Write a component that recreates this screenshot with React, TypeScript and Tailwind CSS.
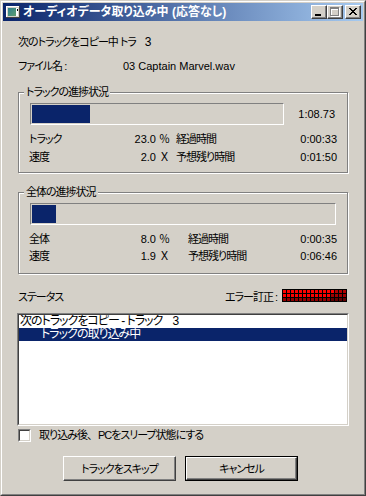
import React from "react";

const FONT = "font-['Liberation_Sans','Noto_Sans_CJK_JP',sans-serif] [font-feature-settings:'palt']";
const J = "tracking-[-1px]";
const FW = "[font-feature-settings:normal] tracking-normal";

function TitleIcon() {
  return (
    <svg width="16" height="16" viewBox="0 0 16 16" shapeRendering="crispEdges">
      <defs>
        <linearGradient id="ti" x1="0" y1="0" x2="1" y2="1">
          <stop offset="0" stopColor="#2f7f8f" />
          <stop offset="1" stopColor="#5f9f6f" />
        </linearGradient>
      </defs>
      <rect x="1" y="2" width="14" height="12" fill="#d4d0c8" />
      <rect x="1" y="2" width="14" height="1" fill="#ffffff" />
      <rect x="1" y="2" width="1" height="12" fill="#ffffff" />
      <rect x="1" y="13" width="14" height="1" fill="#404040" />
      <rect x="14" y="2" width="1" height="12" fill="#404040" />
      <rect x="3" y="4" width="8" height="8" fill="url(#ti)" />
      <rect x="11" y="4" width="2" height="8" fill="#ffffff" />
      <rect x="12" y="5" width="1" height="2" fill="#000000" />
    </svg>
  );
}

function CapButton({ children }: { children: React.ReactNode }) {
  return (
    <div className="w-[16px] h-[14px] bg-[#d4d0c8] border border-t-white border-l-white border-r-[#404040] border-b-[#404040] shadow-[inset_-1px_-1px_0_#808080] flex">
      {children}
    </div>
  );
}

const X_PIX = [
  "XX....XX",
  ".XX..XX.",
  "..XXXX..",
  "...XX...",
  "..XXXX..",
  ".XX..XX.",
  "XX....XX",
];

function CloseGlyph() {
  const rects: React.ReactNode[] = [];
  X_PIX.forEach((row, y) =>
    row.split("").forEach((ch, x) => {
      if (ch === "X") rects.push(<rect key={`${x}-${y}`} x={x} y={y} width="1" height="1" fill="#000" />);
    })
  );
  return (
    <svg width="8" height="7" viewBox="0 0 8 7" shapeRendering="crispEdges" className="ml-[3px] mt-[2px]">
      {rects}
    </svg>
  );
}

function MaxGlyph() {
  const box = (o: number, c: string) => (
    <g>
      <rect x={o} y={o} width="9" height="2" fill={c} />
      <rect x={o} y={o} width="1" height="9" fill={c} />
      <rect x={o + 8} y={o} width="1" height="9" fill={c} />
      <rect x={o} y={o + 8} width="9" height="1" fill={c} />
    </g>
  );
  return (
    <svg width="10" height="10" viewBox="0 0 10 10" shapeRendering="crispEdges" className="ml-[2px] mt-[1px]">
      {box(1, "#ffffff")}
      {box(0, "#808080")}
    </svg>
  );
}

function MinGlyph() {
  return (
    <svg width="6" height="2" viewBox="0 0 6 2" shapeRendering="crispEdges" className="ml-[3px] mt-[8px]">
      <rect x="0" y="0" width="6" height="2" fill="#000" />
    </svg>
  );
}

const METER: string[][] = [
  Array.from({ length: 16 }, (_, c) => (c < 13 ? "bg-[#ff0000]" : "bg-[#b00000]")),
  Array.from({ length: 16 }, (_, c) => (c < 12 ? "bg-[#ff0000]" : "bg-[#a00000]")),
  Array.from({ length: 16 }, (_, c) => (c < 12 ? "bg-[#900000]" : "bg-[#600000]")),
];

function Meter() {
  return (
    <div className="grid grid-cols-[repeat(16,3px)] grid-rows-[repeat(3,3px)] gap-[1px] p-[1px] bg-black w-[65px] h-[13px]">
      {METER.flatMap((row, r) => row.map((cls, c) => <div key={`${r}-${c}`} className={cls} />))}
    </div>
  );
}

function ProgressBar({ widthClass, fillClass }: { widthClass: string; fillClass: string }) {
  return (
    <div className={`${widthClass} ml-[1px] h-[22px] border border-t-[#808080] border-l-[#808080] border-r-white border-b-white p-[1px]`}>
      <div className={`${fillClass} h-full bg-[#0a246a]`} />
    </div>
  );
}

function StatRow({
  label,
  num,
  unit,
  label2,
  time,
  gapClass,
  hClass,
}: {
  label: string;
  num: string;
  unit: string;
  label2: string;
  time: string;
  gapClass: string;
  hClass: string;
}) {
  return (
    <div className={`flex items-center ${hClass} whitespace-nowrap`}>
      <div className="w-[141px] flex justify-between">
        <span className={J}>{label}</span>
        <span>
          {num} <span className={FW}>{unit}</span>
        </span>
      </div>
      <span className={`${gapClass} ${J}`}>{label2}</span>
      <span className="flex-1 text-right">{time}</span>
    </div>
  );
}

export default function App() {
  return (
    <div className={`${FONT} text-[11px] text-black w-[366px] h-[496px] bg-[#d4d0c8] border border-t-[#d4d0c8] border-l-[#d4d0c8] border-r-[#404040] border-b-[#404040]`}>
      <div className="h-full border border-t-white border-l-white border-r-[#808080] border-b-[#808080] p-[1px] flex flex-col">
        {/* Title bar */}
        <div className="h-[18px] flex items-center bg-[linear-gradient(to_right,#0a246a,#a6caf0)]">
          <div className="ml-[2px]">
            <TitleIcon />
          </div>
          <span className="ml-[2px] text-white font-bold text-[12px] leading-[18px] whitespace-nowrap">
            オーディオデータ取り込み中 (応答なし)
          </span>
          <div className="ml-auto mr-[2px] flex items-center">
            <CapButton>
              <MinGlyph />
            </CapButton>
            <CapButton>
              <MaxGlyph />
            </CapButton>
            <div className="ml-[2px]">
              <CapButton>
                <CloseGlyph />
              </CapButton>
            </div>
          </div>
        </div>

        {/* Content */}
        <div className="px-[14px] flex flex-col">
          <div className="mt-[14px] h-[14px] leading-[14px] pl-[1px] flex whitespace-nowrap">
            <span className={J}>次のトラックをコピー中 トラ</span>
            <span className="ml-[9px] text-[12px]">3</span>
          </div>
          <div className="mt-[10px] h-[14px] leading-[14px] pl-[1px] flex whitespace-nowrap">
            <span className={`w-[105px] ${J}`}>ファイル名 :</span>
            <span>03 Captain Marvel.wav</span>
          </div>

          {/* Group 1 */}
          <fieldset className="mt-[12px] ml-[1px] w-[330px] border border-[#808080] shadow-[inset_1px_1px_0_#fff,1px_1px_0_#fff]">
            <legend className={`ml-[5px] px-[2px] leading-[14px] bg-[#d4d0c8] ${J}`}>トラックの進捗状況</legend>
            <div className="px-[10px] pt-[4px] pb-[6px]">
              <div className="flex items-center">
                <ProgressBar widthClass="w-[254px]" fillClass="w-[23%]" />
                <span className="flex-1 text-right pr-[2px]">1:08.73</span>
              </div>
              <div className="mt-[5px]">
                <StatRow label="トラック" num="23.0" unit="％" label2="経過時間" time="0:00:33" gapClass="ml-[6px]" hClass="h-[18px]" />
                <StatRow label="速度" num="2.0" unit="Ｘ" label2="予想残り時間" time="0:01:50" gapClass="ml-[6px]" hClass="h-[18px]" />
              </div>
            </div>
          </fieldset>

          {/* Group 2 */}
          <fieldset className="mt-[12px] ml-[1px] w-[330px] border border-[#808080] shadow-[inset_1px_1px_0_#fff,1px_1px_0_#fff]">
            <legend className={`ml-[5px] px-[2px] leading-[14px] bg-[#d4d0c8] ${J}`}>全体の進捗状況</legend>
            <div className="px-[10px] pt-[4px] pb-[8px]">
              <ProgressBar widthClass="w-[306px]" fillClass="w-[8%]" />
              <div className="mt-[6px]">
                <StatRow label="全体" num="8.0" unit="％" label2="経過時間" time="0:00:35" gapClass="ml-[18px]" hClass="h-[17px]" />
                <StatRow label="速度" num="1.9" unit="Ｘ" label2="予想残り時間" time="0:06:46" gapClass="ml-[18px]" hClass="h-[17px]" />
              </div>
            </div>
          </fieldset>

          {/* Status row */}
          <div className="mt-[15px] flex items-start whitespace-nowrap">
            <span className={`mt-[1px] pl-[1px] leading-[14px] ${J}`}>ステータス</span>
            <span className={`ml-auto mt-[1px] leading-[14px] ${J}`}>エラー訂正 :</span>
            <div className="ml-[5px] mr-[2px]">
              <Meter />
            </div>
          </div>

          {/* Listbox */}
          <div className="mt-[9px] h-[113px] border border-t-[#808080] border-l-[#808080] border-r-white border-b-white">
            <div className="h-full bg-white border border-t-[#404040] border-l-[#404040] border-r-[#d4d0c8] border-b-[#d4d0c8] overflow-hidden text-[12px] tracking-[-1px]">
              <div className="h-[13px] leading-[13px] pl-[1px] whitespace-nowrap flex">
                <span>次のトラックをコピー - トラック</span>
                <span className="ml-[10px]">3</span>
              </div>
              <div className="h-[13px] leading-[13px] pl-[22px] whitespace-nowrap bg-[#0a246a] text-white">トラックの取り込み中</div>
            </div>
          </div>

          {/* Checkbox */}
          <div className="mt-[3px] h-[13px] flex items-center whitespace-nowrap">
            <div className="ml-[1px] w-[13px] h-[13px] border border-t-[#808080] border-l-[#808080] border-r-white border-b-white">
              <div className="h-full bg-white border border-t-[#404040] border-l-[#404040] border-r-[#d4d0c8] border-b-[#d4d0c8]" />
            </div>
            <span className={`ml-[8px] leading-[13px] ${J}`}>
              取り込み後<span className={FW}>、</span>PCをスリープ状態にする
            </span>
          </div>

          {/* Buttons */}
          <div className="mt-[14px] ml-[46px] flex gap-[9px]">
            <div className={`w-[113px] h-[25px] pt-[1px] flex items-center justify-center border border-t-white border-l-white border-r-[#404040] border-b-[#404040] shadow-[inset_-1px_-1px_0_#808080] ${J}`}>
              トラックをスキップ
            </div>
            <div className="w-[113px] h-[25px] border border-black">
              <div className={`h-full pt-[1px] flex items-center justify-center border border-t-white border-l-white border-r-[#404040] border-b-[#404040] shadow-[inset_-1px_-1px_0_#808080] ${J}`}>
                キャンセル
              </div>
            </div>
          </div>
        </div>
      </div>
    </div>
  );
}
